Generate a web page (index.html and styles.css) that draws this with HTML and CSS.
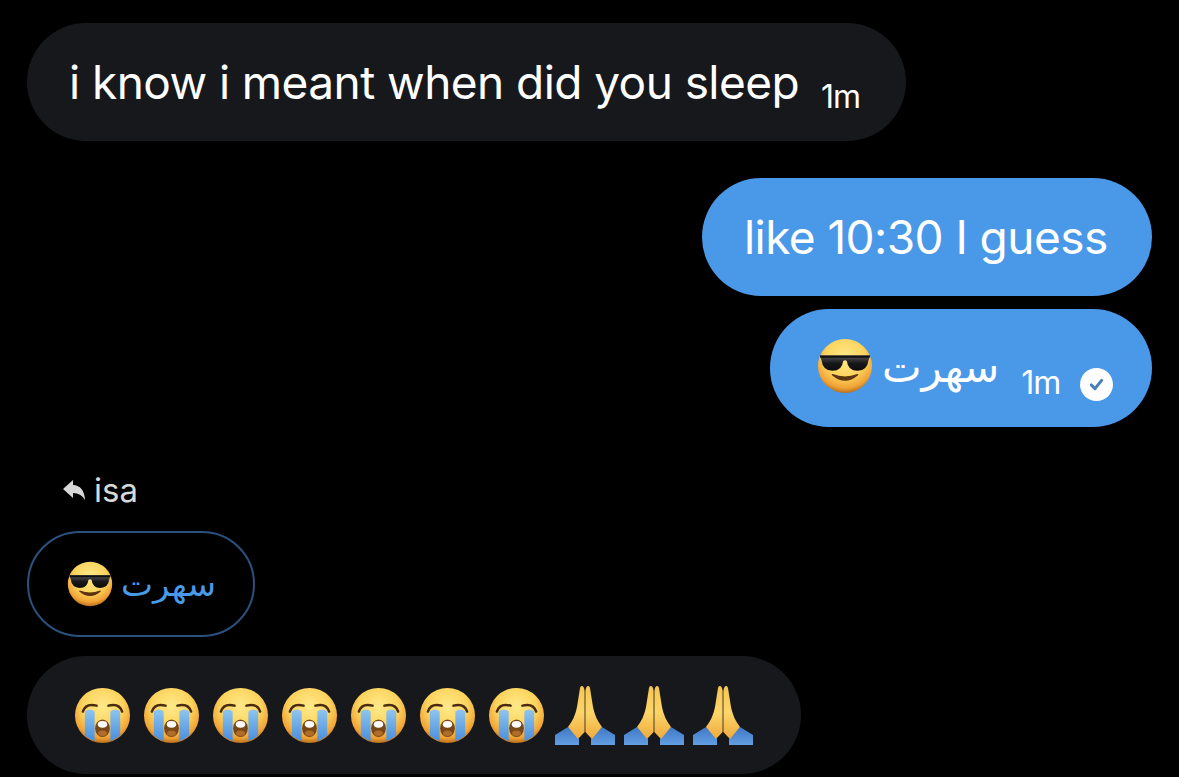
FILE: index.html
```html
<!DOCTYPE html>
<html lang="en">
<head>
<meta charset="utf-8">
<title>Messages</title>
<link rel="stylesheet" href="styles.css">
</head>
<body>
<svg class="defs" width="0" height="0" aria-hidden="true">
  <defs>
    <radialGradient id="face" cx="50%" cy="34%" r="66%">
      <stop offset="0" stop-color="#ffe98a"/>
      <stop offset=".55" stop-color="#fcd45e"/>
      <stop offset=".86" stop-color="#f0a235"/>
      <stop offset="1" stop-color="#b86f1c"/>
    </radialGradient>
    <linearGradient id="tear" x1="0" y1="0" x2="0" y2="1">
      <stop offset="0" stop-color="#8fc5ee"/>
      <stop offset="1" stop-color="#4a8edc"/>
    </linearGradient>
    <linearGradient id="lens" x1="0" y1="0" x2="0" y2="1">
      <stop offset="0" stop-color="#5a5a5e"/>
      <stop offset=".5" stop-color="#18181a"/>
      <stop offset="1" stop-color="#0c0c0c"/>
    </linearGradient>
    <linearGradient id="hand" x1="0" y1="0" x2="0" y2="1">
      <stop offset="0" stop-color="#f6c552"/>
      <stop offset=".5" stop-color="#fdd568"/>
      <stop offset="1" stop-color="#eeaa3e"/>
    </linearGradient>
    <linearGradient id="sleeve" x1="0" y1="0" x2="0" y2="1">
      <stop offset="0" stop-color="#3f78c6"/>
      <stop offset="1" stop-color="#639ee2"/>
    </linearGradient>
    <symbol id="cool" viewBox="0 0 58 58">
      <circle cx="29" cy="29" r="28" fill="url(#face)"/>
      <path d="M3 18 H55 L53.500 22.500 Q52 34 42 34 Q32 34 31 24 Q29 22 27 24 Q26 34 16 34 Q6 34 4.500 22.500Z" fill="url(#lens)"/>
      <path d="M3 18 H55 L54.500 20.500 H3.500Z" fill="#101012"/>
      <path d="M16 38 Q29 49 42 38 Q29 43 16 38Z" fill="#5b3410" stroke="#5b3410" stroke-width="1.500" stroke-linejoin="round"/>
    </symbol>
    <symbol id="cry" viewBox="0 0 58 58">
      <circle cx="29" cy="29" r="28" fill="url(#face)"/>
      <path d="M9 25 Q12 16 23 19 M35 19 Q46 16 49 25" fill="none" stroke="#4a2c10" stroke-width="2.500" stroke-linecap="round"/>
      <path d="M11 25 Q16 21 21 25 V55 Q15 53 11 49Z M37 25 Q42 21 47 25 V49 Q43 53 37 55Z" fill="url(#tear)"/>
      <ellipse cx="29" cy="42" rx="7.500" ry="9" fill="#7a4716"/>
      <ellipse cx="29" cy="38" rx="4.800" ry="3.400" fill="#fff"/>
      <ellipse cx="29" cy="47" rx="4.500" ry="2.800" fill="#b06d2a"/>
    </symbol>
    <symbol id="pray" viewBox="0 0 61 60">
      <path d="M0 60 V50 L13 42 L24 54 L24 60Z M60 60 V50 L47 42 L36 54 L36 60Z" fill="url(#sleeve)"/>
      <path d="M29.600 6 Q29 1 26.800 1 Q25 1 24.700 5 L22 22 Q20 33 13 42 L23 54 Q27 50 29.600 47Z" fill="url(#hand)"/>
      <path d="M30.400 6 Q31 1 33.200 1 Q35 1 35.300 5 L38 22 Q40 33 47 42 L37 54 Q33 50 30.400 47Z" fill="url(#hand)"/>
    </symbol>
  </defs>
</svg>
<main class="thread">
  <div class="bubble incoming first">
    <span class="text">i know i meant when did you sleep</span>
    <span class="time time-in">1m</span>
  </div>

  <div class="bubble outgoing second">
    <span class="text">like 10:30 I guess</span>
  </div>

  <div class="bubble outgoing third">
    <svg class="emoji cool-lg"><use href="#cool"/></svg>
    <span class="text arabic" dir="rtl">سهرت</span>
    <span class="time time-out">1m</span>
    <svg class="check" viewBox="0 0 32 32" aria-hidden="true">
      <circle cx="16" cy="16" r="16" fill="#fff"/>
      <path d="M11 16.500 L14.500 20 L21 12" fill="none" stroke="#4a7fb8" stroke-width="3" stroke-linecap="round" stroke-linejoin="round"/>
    </svg>
  </div>

  <div class="reply-label">
    <svg class="reply-icon" viewBox="0 0 22 20" aria-hidden="true">
      <path d="M0 9 L10 0 V5 Q21 5.500 22 20 Q18 13 10 13 V18Z" fill="#d8d8d8"/>
    </svg>
    <span>isa</span>
  </div>

  <div class="quoted">
    <svg class="emoji cool-sm"><use href="#cool"/></svg>
    <span class="arabic quoted-text" dir="rtl">سهرت</span>
  </div>

  <div class="bubble incoming last">
    <svg class="emoji cry"><use href="#cry"/></svg>
    <svg class="emoji cry"><use href="#cry"/></svg>
    <svg class="emoji cry"><use href="#cry"/></svg>
    <svg class="emoji cry"><use href="#cry"/></svg>
    <svg class="emoji cry"><use href="#cry"/></svg>
    <svg class="emoji cry"><use href="#cry"/></svg>
    <svg class="emoji cry"><use href="#cry"/></svg>
    <svg class="emoji pray"><use href="#pray"/></svg>
    <svg class="emoji pray"><use href="#pray"/></svg>
    <svg class="emoji pray"><use href="#pray"/></svg>
  </div>
</main>
</body>
</html>
```
FILE: styles.css
```css
* { box-sizing: border-box; }
html, body { margin: 0; height: 100%; background: #000; overflow: hidden; }
body { font-family: Inter, "Liberation Sans", sans-serif; color: #fff; }
.defs { display: block; height: 0; }
.thread {
  display: flex;
  flex-direction: column;
  align-items: flex-start;
  padding: 23px 27px 0;
}
.bubble {
  display: flex;
  align-items: center;
  height: 118px;
  border-radius: 59px;
}
.incoming { background: #16181c; }
.outgoing { background: #4a99e9; align-self: flex-end; }
.text { font-size: 46px; letter-spacing: -0.56px; line-height: 1; white-space: nowrap; }
.first { width: 879px; padding-left: 42px; }
.time { font-size: 32px; letter-spacing: -1px; line-height: 1; }
.time-in { margin-left: 22px; margin-top: 30px; }
.second { width: 450px; margin-top: 37px; padding-left: 42px; }
.third { width: 382px; margin-top: 13px; padding-left: 47px; }
.arabic { font-family: "DejaVu Sans", sans-serif; }
.cool-lg { width: 56px; height: 56px; margin-top: -4px; }
.third .arabic { font-size: 42px; margin-left: 9px; letter-spacing: 0; }
.time-out { margin-left: 22px; margin-top: 30px; }
.check { width: 33px; height: 33px; margin-left: 20px; margin-top: 32px; }
.emoji { display: block; flex: none; }
.reply-label {
  display: flex;
  align-items: center;
  gap: 9px;
  margin: 44px 0 0 36px;
  height: 38px;
  font-size: 33px;
  color: #d8d8d8;
}
.reply-icon { width: 22px; height: 20px; }
.quoted {
  display: flex;
  align-items: center;
  width: 228px;
  height: 106px;
  margin-top: 22px;
  padding-left: 38px;
  border: 2px solid #2b5180;
  border-radius: 53px;
}
.cool-sm { width: 46px; height: 46px; }
.quoted-text { font-size: 34px; color: #4a99e9; margin-left: 8px; }
.last { width: 774px; margin-top: 19px; padding-left: 47px; }
.cry { width: 57px; height: 57px; margin-right: 12px; }
.pray { width: 61px; height: 60px; margin-right: 8px; }
.cry:nth-of-type(7) { margin-right: 10px; }
```
